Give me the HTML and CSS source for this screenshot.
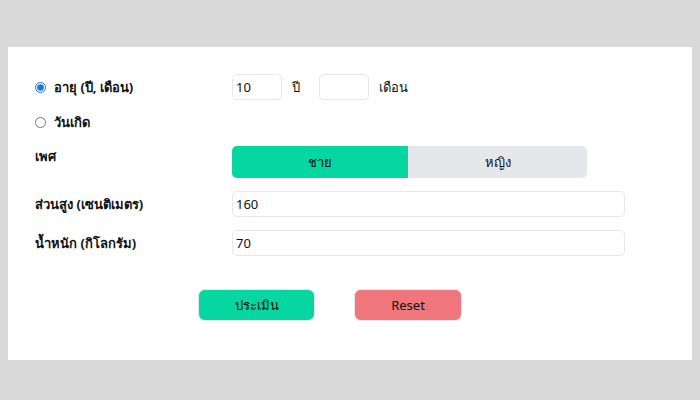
FILE: index.html
```html
<!DOCTYPE html>
<html lang="th">
<head>
<meta charset="utf-8">
<link rel="stylesheet" href="styles.css">
</head>
<body>
<div class="card">
  <div class="row row-age">
    <label class="label radio-label"><input type="radio" name="mode" checked class="radio"><span>อายุ (ปี, เดือน)</span></label>
    <div class="field age-field">
      <input class="input small" type="text" value="10">
      <span class="unit">ปี</span>
      <input class="input small" type="text" value="">
      <span class="unit">เดือน</span>
    </div>
  </div>
  <div class="row row-birth">
    <label class="label radio-label"><input type="radio" name="mode" class="radio"><span>วันเกิด</span></label>
  </div>
  <div class="row row-sex">
    <div class="label sex-label">เพศ</div>
    <div class="segment">
      <div class="seg seg-on">ชาย</div>
      <div class="seg seg-off">หญิง</div>
    </div>
  </div>
  <div class="row row-input">
    <div class="label">ส่วนสูง (เซนติเมตร)</div>
    <input class="input wide" type="text" value="160">
  </div>
  <div class="row row-input">
    <div class="label">น้ำหนัก (กิโลกรัม)</div>
    <input class="input wide" type="text" value="70">
  </div>
  <div class="buttons">
    <button class="btn btn-go">ประเมิน</button>
    <button class="btn btn-reset">Reset</button>
  </div>
</div>
</body>
</html>
```
FILE: styles.css
```css
html, body {
  margin: 0;
  padding: 0;
  background: #d9d9d9;
  overflow: hidden;
}
body {
  box-sizing: border-box;
  height: 400px;
  padding: 47px 8px 0;
  font-family: "Noto Sans", "DejaVu Sans", sans-serif;
  color: #111;
  font-size: 13px;
}
.card {
  background: #fff;
  height: 313px;
  box-sizing: border-box;
  padding: 27px 0 0 27px;
}
.row {
  display: flex;
  align-items: center;
}
.label {
  width: 197px;
  flex: none;
  font-weight: bold;
  font-size: 13px;
}
.radio-label {
  display: flex;
  align-items: center;
  gap: 8px;
}
.radio {
  margin: 0;
  width: 11px;
  height: 11px;
  accent-color: #1a73e8;
}
.row-age { height: 26px; }
.row-birth { height: 20px; margin-top: 12px; }
.age-field {
  display: flex;
  align-items: center;
}
.unit { margin: 0 0 0 10px; font-size: 13px; }
.unit:nth-of-type(1) { margin-right: 19px; }
.input {
  box-sizing: border-box;
  height: 26px;
  border: 1px solid #e5e7eb;
  border-radius: 5px;
  padding: 0 3px;
  font-family: inherit;
  font-size: 13px;
  color: #111;
  outline: none;
  background: #fff;
}
.small { width: 50px; }
.wide { width: 393px; }
.row-sex {
  margin-top: 14px;
  align-items: flex-start;
}
.sex-label { padding-top: 0; }
.segment {
  display: flex;
  width: 355px;
  height: 32px;
  border-radius: 5px;
  overflow: hidden;
  background: #e5e7eb;
}
.seg {
  flex: none;
  display: flex;
  align-items: center;
  justify-content: center;
  font-size: 13px;
}
.seg-on { width: 176px; background: #06d6a0; }
.seg-off { width: 179px; }
.row-input { margin-top: 13px; height: 26px; }
.buttons {
  display: flex;
  margin-top: 33px;
  padding-left: 163px;
  gap: 39px;
}
.btn {
  box-sizing: border-box;
  height: 32px;
  border: 1px solid #e5e7eb;
  border-radius: 7px;
  font-family: inherit;
  font-size: 13px;
  color: #111;
  padding: 0;
}
.btn-go { width: 117px; background: #06d6a0; }
.btn-reset { width: 108px; background: #ef767a; }
```
